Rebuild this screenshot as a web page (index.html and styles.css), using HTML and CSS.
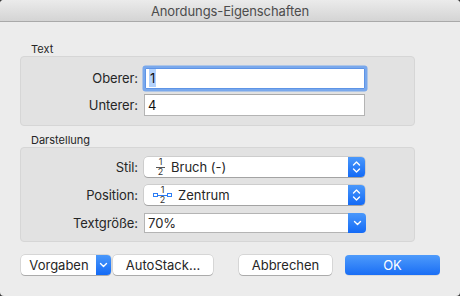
FILE: index.html
```html
<!DOCTYPE html>
<html lang="de">
<head>
<meta charset="utf-8">
<title>Anordungs-Eigenschaften</title>
<link rel="stylesheet" href="styles.css">
</head>
<body>
<div class="window">
  <div class="titlebar">Anordungs-Eigenschaften</div>
  <div class="content">
    <div class="group-label">Text</div>
    <div class="group group-text">
      <div class="row">
        <label class="lbl">Oberer:</label>
        <div class="field focus"><span class="sel">1</span></div>
      </div>
      <div class="row">
        <label class="lbl">Unterer:</label>
        <div class="field">4</div>
      </div>
    </div>

    <div class="group-label">Darstellung</div>
    <div class="group group-display">
      <div class="row">
        <label class="lbl">Stil:</label>
        <div class="popup">
          <span class="value">
            <span class="frac"><span class="n">1</span><span class="bar"></span><span class="n">2</span></span>
            Bruch (-)
          </span>
          <span class="stepper">
            <svg width="9" height="14" viewBox="0 0 9 14"><path d="M1.5 5 L4.5 2 L7.5 5 M1.5 9 L4.5 12 L7.5 9" fill="none" stroke="#fff" stroke-width="1.4" stroke-linecap="round" stroke-linejoin="round"/></svg>
          </span>
        </div>
      </div>
      <div class="row">
        <label class="lbl">Position:</label>
        <div class="popup">
          <span class="value">
            <span class="posicon">
              <span class="pbox"></span>
              <span class="frac blue"><span class="n">1</span><span class="bar"></span><span class="n">2</span></span>
              <span class="pbox r"></span>
            </span>
            Zentrum
          </span>
          <span class="stepper">
            <svg width="9" height="14" viewBox="0 0 9 14"><path d="M1.5 5 L4.5 2 L7.5 5 M1.5 9 L4.5 12 L7.5 9" fill="none" stroke="#fff" stroke-width="1.4" stroke-linecap="round" stroke-linejoin="round"/></svg>
          </span>
        </div>
      </div>
      <div class="row">
        <label class="lbl">Textgröße:</label>
        <div class="combo">
          <span class="combo-text">70%</span>
          <span class="combo-btn">
            <svg width="9" height="6" viewBox="0 0 9 6"><path d="M1.5 1.5 L4.5 4.5 L7.5 1.5" fill="none" stroke="#fff" stroke-width="1.4" stroke-linecap="round" stroke-linejoin="round"/></svg>
          </span>
        </div>
      </div>
    </div>

    <div class="buttons">
      <div class="btn pulldown">
        <span class="pd-text">Vorgaben</span>
        <span class="pd-arrow">
          <svg width="9" height="6" viewBox="0 0 9 6"><path d="M1.5 1.5 L4.5 4.5 L7.5 1.5" fill="none" stroke="#fff" stroke-width="1.4" stroke-linecap="round" stroke-linejoin="round"/></svg>
        </span>
      </div>
      <div class="btn autostack">AutoStack...</div>
      <div class="spacer"></div>
      <div class="btn cancel">Abbrechen</div>
      <div class="btn ok">OK</div>
    </div>
  </div>
</div>
</body>
</html>
```

FILE: styles.css
```css
* { box-sizing: border-box; }

html, body {
  margin: 0;
  padding: 0;
}

body {
  width: 460px;
  height: 296px;
  overflow: hidden;
  background: #3a3a3a;
  font-family: "Inter", "Roboto", "Liberation Sans", sans-serif;
  font-size: 13px;
  color: #262626;
}

.window {
  width: 460px;
  height: 296px;
  background: #ececec;
  border-radius: 4px;
  overflow: hidden;
  display: flex;
  flex-direction: column;
}

.titlebar {
  height: 22px;
  flex: none;
  background: linear-gradient(#ebebeb, #d4d4d4);
  border-bottom: 1px solid #a9a9a9;
  text-align: center;
  line-height: 22px;
  font-size: 13px;
  color: #4c4c4c;
  letter-spacing: -0.1px;
}

.content {
  padding: 20px 20px 0 20px;
  display: flex;
  flex-direction: column;
}

.group-label {
  font-size: 11px;
  line-height: 14px;
  height: 14px;
  padding-left: 11px;
  color: #262626;
}

.group {
  width: 395px;
  background: #e2e2e2;
  border: 1px solid #d6d6d6;
  border-radius: 4px;
  display: flex;
  flex-direction: column;
}

.group-text {
  height: 70px;
  padding-top: 10px;
  gap: 5px;
  margin-bottom: 7px;
}

.group-display {
  height: 95px;
  padding-top: 9px;
  gap: 8px;
}

.row {
  display: flex;
  align-items: center;
  height: 21px;
}

.group-text .row { height: 22px; }
.group-display .row { height: 20px; }

.lbl {
  width: 117px;
  text-align: right;
  margin-right: 6px;
  flex: none;
  letter-spacing: -0.1px;
}

.field {
  width: 221px;
  height: 22px;
  background: #fff;
  border: 1px solid #b4b4b4;
  border-top-color: #a9a9a9;
  padding-left: 3px;
  line-height: 20px;
  font-size: 13px;
  color: #111;
}

.field.focus {
  margin-left: 1px;
  width: 220px;
  height: 21px;
  border: 1px solid #5e94e6;
  box-shadow: 0 0 0 2.5px #79a8ec;
  border-radius: 1px;
  line-height: 19px;
}

.sel {
  background: #b3d2fc;
  padding: 1px 1px;
}

.popup {
  width: 221px;
  height: 20px;
  background: #fff;
  border-radius: 4px;
  box-shadow: 0 0 0 0.5px rgba(0,0,0,0.18), 0 1px 0.5px rgba(0,0,0,0.2);
  display: flex;
  align-items: stretch;
  overflow: hidden;
}

.popup .value {
  flex: 1;
  display: flex;
  align-items: center;
  padding-left: 12px;
  gap: 6px;
  line-height: 20px;
}

.stepper, .combo-btn {
  width: 17px;
  flex: none;
  background: linear-gradient(#4a98fb, #136af6);
  display: flex;
  align-items: center;
  justify-content: center;
}

.combo-btn { width: 18px; }

.frac {
  display: inline-flex;
  flex-direction: column;
  align-items: center;
  width: 9px;
  font-size: 9px;
  line-height: 8px;
  color: #333;
}

.frac .bar {
  width: 9px;
  height: 1px;
  background: #555;
  margin: 0.5px 0 0.5px;
}

.frac.blue .bar { background: #2d7ef5; width: 9px; }

.posicon {
  display: inline-flex;
  align-items: center;
  margin-left: -3px;
}

.pbox {
  width: 3px;
  height: 2px;
  border: 1px solid #2d7ef5;
  box-sizing: content-box;
}

.combo {
  width: 222px;
  height: 20px;
  display: flex;
  align-items: stretch;
}

.combo-text {
  flex: 1;
  background: #fff;
  border: 1px solid #b4b4b4;
  border-right: none;
  padding-left: 3px;
  line-height: 18px;
}

.combo-btn {
  border-radius: 0 4px 4px 0;
}

.buttons {
  display: flex;
  align-items: center;
  margin-top: 13px;
  height: 20px;
  padding-left: 1px;
}

.spacer { flex: 1; }

.btn {
  height: 20px;
  background: #fff;
  border-radius: 4px;
  box-shadow: 0 0 0 0.5px rgba(0,0,0,0.18), 0 1px 0.5px rgba(0,0,0,0.2);
  display: flex;
  align-items: center;
  justify-content: center;
  line-height: 20px;
  color: #262626;
}

.pulldown {
  width: 90px;
  justify-content: flex-start;
  overflow: hidden;
  align-items: stretch;
}

.pd-text {
  flex: 1;
  text-align: center;
  padding-left: 1px;
}

.pd-arrow {
  width: 15px;
  flex: none;
  background: linear-gradient(#4a98fb, #136af6);
  display: flex;
  align-items: center;
  justify-content: center;
}

.autostack {
  width: 100px;
  margin-left: 2px;
}

.cancel {
  width: 93px;
}

.ok {
  width: 95px;
  margin-left: 13px;
  background: linear-gradient(#4e9bfb, #1a6ef5);
  color: #fff;
  box-shadow: 0 0.5px 0.5px rgba(0,0,0,0.15);
}
```
